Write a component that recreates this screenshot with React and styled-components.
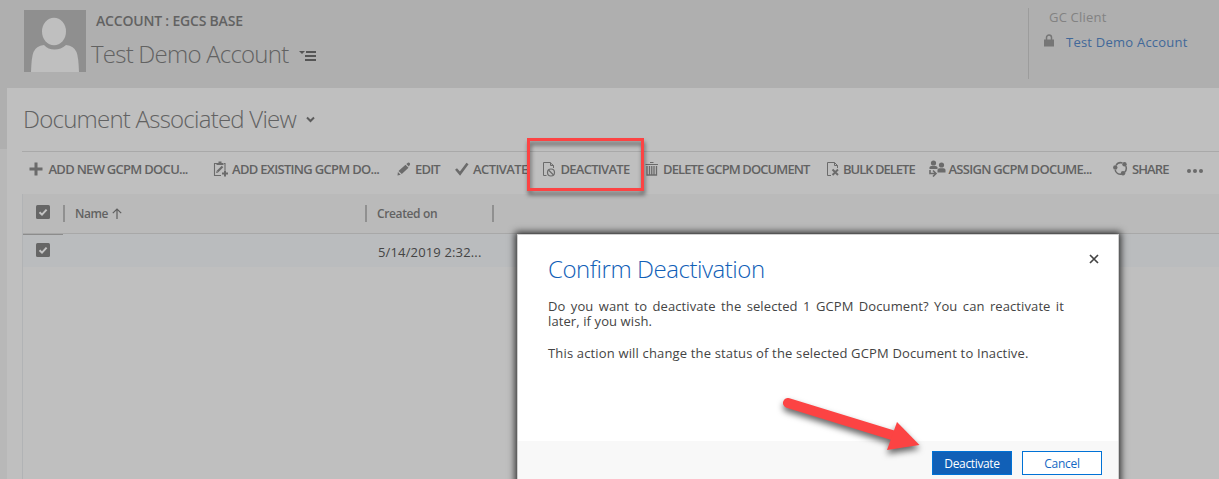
import React from "react";
import styled, { createGlobalStyle } from "styled-components";

const GlobalStyle = createGlobalStyle`
  *, *::before, *::after { box-sizing: border-box; }
  body { margin: 0; overflow: hidden; background: #bfbfbf; }
  p, h1, h2 { margin: 0; font-weight: inherit; }
  svg { display: block; flex: none; }
`;

const Page = styled.div`
  position: relative;
  width: 1219px;
  height: 479px;
  overflow: hidden;
  display: flex;
  flex-direction: column;
  background: linear-gradient(#afafaf 149px, #b8b8b8 149px);
  font-family: "Open Sans", "Noto Sans", sans-serif;
  color: #626262;
`;

const Label = styled.span`
  white-space: nowrap;
  font-size: ${(p) => p.$size || 13}px;
  font-weight: ${(p) => p.$weight || 400};
  letter-spacing: ${(p) => p.$track || 0}px;
  line-height: ${(p) => p.$line || 18}px;
  color: ${(p) => p.$color || "inherit"};
`;

const RecordHeader = styled.header`
  display: flex;
  height: 88px;
  padding: 10px 0 0 24px;
`;

const Titles = styled.div`
  display: flex;
  flex-direction: column;
  width: 942px;
  padding: 0 0 0 5px;
`;

const RecordType = styled.div`
  display: flex;
  align-items: center;
  height: 22px;
  padding-left: 5px;
`;

const TitleRow = styled.div`
  display: flex;
  align-items: center;
  height: 44px;
  gap: ${(p) => p.$gap}px;
`;

const MenuIcon = styled.svg`
  margin-top: 3px;
`;

const ClientField = styled.aside`
  display: flex;
  flex-direction: column;
  width: 180px;
  height: 71px;
  margin-top: -2px;
  padding-left: 20px;
  border-left: 1px solid #9c9c9c;
`;

const ClientValue = styled.div`
  display: flex;
  align-items: center;
  height: 24px;
  margin: 4px 0 0 -5px;
  gap: 12px;
`;

const LockIcon = styled.svg`
  margin-top: -3px;
`;

const Panel = styled.main`
  flex: 1;
  margin-left: 7px;
  padding-left: 15px;
  background: #bfbfbf;
`;

const ViewTitle = styled.div`
  display: flex;
  align-items: center;
  gap: 10px;
  height: 63px;
  padding: 0 0 2px 1px;
`;

const Toolbar = styled.nav`
  display: flex;
  align-items: center;
  height: 43px;
  padding: 0 0 9px 7px;
  border-top: 1px solid #a9a9a9;
`;

const Command = styled.div`
  display: flex;
  align-items: center;
  flex: none;
  width: ${(p) => p.$width}px;
`;

const CommandIcon = styled.span`
  flex: none;
  width: ${(p) => p.$width}px;
`;

const MoreIcon = styled.svg`
  margin-top: 2px;
`;

const Grid = styled.section`
  border-left: 1px solid #b1b3b5;
  height: 285px;
`;

const GridHeader = styled.div`
  display: flex;
  align-items: center;
  height: 40px;
  background: #bababa;
  border-bottom: 1px solid #a8a8a8;
`;

const GridRow = styled.div`
  display: flex;
  align-items: center;
  height: 33px;
  background: #babcbe;
`;

const CheckCell = styled.div`
  width: 40px;
  height: 100%;
  padding: ${(p) => p.$top}px 0 0 13px;
  border-top: ${(p) => (p.$active ? "1px solid #8c8c8c" : "none")};
`;

const ColumnHead = styled.div`
  display: flex;
  align-items: center;
  gap: 4px;
  width: ${(p) => p.$width}px;
  height: 17px;
  padding-left: ${(p) => p.$inset}px;
  border-left: 2px solid #909090;
`;

const DateCell = styled.div`
  padding: 0 0 0 315px;
`;

const Dialog = styled.div`
  position: absolute;
  left: 517px;
  top: 234px;
  width: 602px;
  height: 260px;
  display: flex;
  flex-direction: column;
  background: #fff;
  border: 1px solid #cfcfcf;
  box-shadow: 0 0 7px 2px rgba(0, 0, 0, 0.75);
  color: #444;
`;

const DialogBody = styled.div`
  position: relative;
  height: 206px;
  padding: 17px 54px 0 30px;
`;

const CloseButton = styled.div`
  position: absolute;
  right: 19px;
  top: 19px;
`;

const Message = styled.p`
  margin-top: ${(p) => p.$top}px;
  font-size: 13px;
  line-height: 15px;
  letter-spacing: ${(p) => p.$track}px;
`;

const JustifiedLine = styled.span`
  display: block;
  text-align: justify;
  text-align-last: ${(p) => (p.$fill ? "justify" : "left")};
  white-space: nowrap;
`;

const DialogFooter = styled.div`
  display: flex;
  justify-content: flex-end;
  gap: 10px;
  flex: 1;
  padding: 10px 16px 0 0;
  background: #f8f8f8;
`;

const Button = styled.button`
  width: 80px;
  height: 24px;
  padding: 1px 0 0;
  border: 1px solid #0072d6;
  background: ${(p) => (p.$primary ? "#1160b7" : "#fff")};
  color: ${(p) => (p.$primary ? "#fff" : "#1468c4")};
  font: 12px/21px "Open Sans", sans-serif;
  letter-spacing: ${(p) => p.$track || 0}px;
`;

const Highlight = styled.div`
  position: absolute;
  left: 527px;
  top: 138px;
  width: 117px;
  height: 53px;
  border: 3px solid #fc4343;
  filter: drop-shadow(1px 4px 2px rgba(0, 0, 0, 0.5));
`;

const Arrow = styled.svg`
  position: absolute;
  left: 770px;
  top: 390px;
  filter: drop-shadow(0 4px 3px rgba(0, 0, 0, 0.6));
`;

const INK = "#6b6b6b";

const Checkbox = () => (
  <svg width="14" height="14">
    <rect width="14" height="14" rx="1.5" fill="#666" />
    <path d="M3.5 7.2 6 9.6l4.6-5" fill="none" stroke="#c4c4c4" strokeWidth="2" />
  </svg>
);

const icons = {
  plus: (
    <svg width="14" height="14"><path d="M7 .5v13M.5 7h13" stroke={INK} strokeWidth="3" /></svg>
  ),
  existing: (
    <svg width="16" height="16" fill="none" stroke={INK}>
      <path d="M4 2.5H1.5v12H8M11 2.5h1V9" strokeWidth="1.1" />
      <path d="M3.5 4V2H5.5V.5h3V2h2v2z" fill={INK} stroke="none" />
      <path d="m4.5 10.5 5-5" strokeWidth="2.2" />
      <path d="m3 12 .8-2.2 1.5 1.6z" fill={INK} stroke="none" />
      <path d="M12 9.5v6M9 12.5h6" strokeWidth="2" />
    </svg>
  ),
  edit: (
    <svg width="14" height="14" fill={INK}>
      <path d="M1.5 9 8.5 2.7l3 3L4.8 12zM9.3 2l1.6-1.3q1-.6 1.8.3t.2 1.8l-1.1 1.8zM.9 9.9l2.8 2.8-3.2.8z" />
    </svg>
  ),
  check: (
    <svg width="14" height="14"><path d="m1 7 4 4.6L12.5 1.5" fill="none" stroke={INK} strokeWidth="2.6" /></svg>
  ),
  deactivate: (
    <svg width="14" height="16" fill="none" stroke={INK}>
      <path d="M4.5 14.5H1.5V1.5h6.5L11.5 4.5V7M8.5 1.5v3h3" strokeWidth="1" />
      <circle cx="9" cy="11.5" r="3.5" strokeWidth="1.2" />
      <path d="m6.5 9 5 5" strokeWidth="1.1" />
    </svg>
  ),
  trash: (
    <svg width="14" height="15" fill="none" stroke={INK}>
      <path d="M.5 3.5h12.5M5 1.5h3.5" strokeWidth="1" />
      <path d="M2 5v9h9.5V5M4.5 5v9M6.75 5v9M9 5v9" strokeWidth="1.3" />
    </svg>
  ),
  bulk: (
    <svg width="13" height="16" fill="none" stroke={INK}>
      <path d="M4 14.5H.5V1.5h7L10.5 4.5V7M7.5 1.5v3h3" strokeWidth="1" />
      <path d="m5.5 8.5 5.5 5.5M11 8.5l-5.5 5.5" strokeWidth="1.9" />
    </svg>
  ),
  assign: (
    <svg width="17" height="17" fill={INK}>
      <circle cx="4.5" cy="3" r="2.6" /><path d="M.5 9V7.5q0-1.5 1.8-1.5h4.2q2 0 2 1.5V9z" />
      <circle cx="12.5" cy="5" r="2.6" /><path d="M8.5 12.5V10q0-1.8 2-1.8h4q2 0 2 1.8v2.5z" />
      <path d="M1 10v3.5h5M4 10.5l3 3-3 3" fill="none" stroke={INK} strokeWidth="1.6" />
    </svg>
  ),
  share: (
    <svg width="15" height="16" fill="none" stroke={INK}>
      <path d="M3 4.5A5.5 5.5 0 0 1 9.5 2M12.8 5A6 6 0 0 1 11.5 11.5M8.5 13.2A5.5 5.5 0 0 1 2.2 9" strokeWidth="1.5" />
      <g fill={INK} stroke="none"><circle cx="2.3" cy="6.5" r="2.2" /><circle cx="11.5" cy="3.3" r="2.2" /><circle cx="10" cy="12.3" r="2.2" /></g>
    </svg>
  ),
};

const commands = [
  { icon: "plus", text: "ADD NEW GCPM DOCU...", width: 184, inset: 19.5, track: -0.72 },
  { icon: "existing", text: "ADD EXISTING GCPM DO...", width: 184, inset: 19, track: -0.7 },
  { icon: "edit", text: "EDIT", width: 58, inset: 18, track: -0.8 },
  { icon: "check", text: "ACTIVATE", width: 87, inset: 18, track: -0.6 },
  { icon: "deactivate", text: "DEACTIVATE", width: 103, inset: 18.5, track: -0.72 },
  { icon: "trash", text: "DELETE GCPM DOCUMENT", width: 182, inset: 18, track: -0.9 },
  { icon: "bulk", text: "BULK DELETE", width: 102, inset: 16, track: -1 },
  { icon: "assign", text: "ASSIGN GCPM DOCUME...", width: 184, inset: 19.5, track: -0.73 },
  { icon: "share", text: "SHARE", width: 73, inset: 19, track: -0.9 },
];

export default function App() {
  return (
    <Page>
      <GlobalStyle />
      <RecordHeader>
        <svg width="62" height="62">
          <rect width="62" height="62" fill="#8f8f8f" />
          <ellipse cx="30" cy="21.5" rx="12" ry="13.7" fill="#bfbfbf" />
          <path d="M7 62Q7.5 47 9.5 42 12 36 20 35q4 4.5 10.5 4.5T42 35q8 1 10.5 7 2 5 2.5 20z" fill="#bfbfbf" />
        </svg>
        <Titles>
          <RecordType><Label $size={14} $weight={600} $track={-0.2}>ACCOUNT : EGCS BASE</Label></RecordType>
          <TitleRow $gap={11}>
            <Label as="h1" $size={24} $weight={300} $line={32} $track={-0.77}>Test Demo Account</Label>
            <MenuIcon width="18" height="12">
              <path d="M0 1h6L3 4z" fill="#555" />
              <path d="M7 2h10M6 6h11M6 10h11" stroke="#555" strokeWidth="2" />
            </MenuIcon>
          </TitleRow>
        </Titles>
        <ClientField>
          <Label $color="#828282" $track={0.2}>GC Client</Label>
          <ClientValue>
            <LockIcon width="10" height="14">
              <path d="M2.5 6V3.5a2.4 2.4 0 0 1 5 0V6" fill="none" stroke="#767676" strokeWidth="1.5" />
              <rect y="5.5" width="10" height="7" fill="#767676" />
            </LockIcon>
            <Label $color="#416899" $track={0.23}>Test Demo Account</Label>
          </ClientValue>
        </ClientField>
      </RecordHeader>
      <Panel>
        <ViewTitle>
          <Label as="h2" $size={24} $weight={300} $line={32} $track={-0.76}>Document Associated View</Label>
          <svg width="9" height="8"><path d="m1 2.5 3.5 3.5L8 2.5" fill="none" stroke="#5c5c5c" strokeWidth="2" /></svg>
        </ViewTitle>
        <Toolbar>
          {commands.map((c) => (
            <Command key={c.icon} $width={c.width}>
              <CommandIcon $width={c.inset}>{icons[c.icon]}</CommandIcon>
              <Label $weight={600} $track={c.track}>{c.text}</Label>
            </Command>
          ))}
          <MoreIcon width="18" height="6" fill={INK}><circle cx="3" cy="4" r="2" /><circle cx="9" cy="4" r="2" /><circle cx="15" cy="4" r="2" /></MoreIcon>
        </Toolbar>
        <Grid>
          <GridHeader>
            <CheckCell $top={11}><Checkbox /></CheckCell>
            <ColumnHead $width={302} $inset={10}>
              <Label $size={12} $weight={600} $track={-0.4}>Name</Label>
              <svg width="10" height="11"><path d="M5 11V1M.8 5.2 5 1l4.2 4.2" fill="none" stroke="#5f5f5f" strokeWidth="1.2" /></svg>
            </ColumnHead>
            <ColumnHead $width={127} $inset={10}><Label $size={12} $weight={600} $track={-0.37}>Created on</Label></ColumnHead>
            <ColumnHead $width={10} $inset={0} />
          </GridHeader>
          <GridRow>
            <CheckCell $top={8} $active><Checkbox /></CheckCell>
            <DateCell><Label $color="#444" $track={0.15}>5/14/2019 2:32...</Label></DateCell>
          </GridRow>
        </Grid>
      </Panel>
      <Highlight />
      <Dialog role="dialog">
        <DialogBody>
          <CloseButton><svg width="10" height="10"><path d="m1 1 8 8M9 1 1 9" stroke="#444" strokeWidth="1.7" /></svg></CloseButton>
          <Label as="h2" $size={24} $weight={300} $line={34} $color="#1160b7" $track={-0.45}>Confirm Deactivation</Label>
          <Message $top={13} $track={0.1}>
            <JustifiedLine $fill>Do you want to deactivate the selected 1 GCPM Document? You can reactivate it</JustifiedLine>
            <JustifiedLine>later, if you wish.</JustifiedLine>
          </Message>
          <Message $top={17} $track={0.16}>This action will change the status of the selected GCPM Document to Inactive.</Message>
        </DialogBody>
        <DialogFooter>
          <Button $primary $track={-0.35}>Deactivate</Button>
          <Button $track={-0.3}>Cancel</Button>
        </DialogFooter>
      </Dialog>
      <Arrow width="160" height="75">
        <path d="M18 13 122 45" stroke="#fc4343" strokeWidth="10" strokeLinecap="round" />
        <path d="M127 32 149.5 55 117 60z" fill="#fc4343" />
      </Arrow>
    </Page>
  );
}
